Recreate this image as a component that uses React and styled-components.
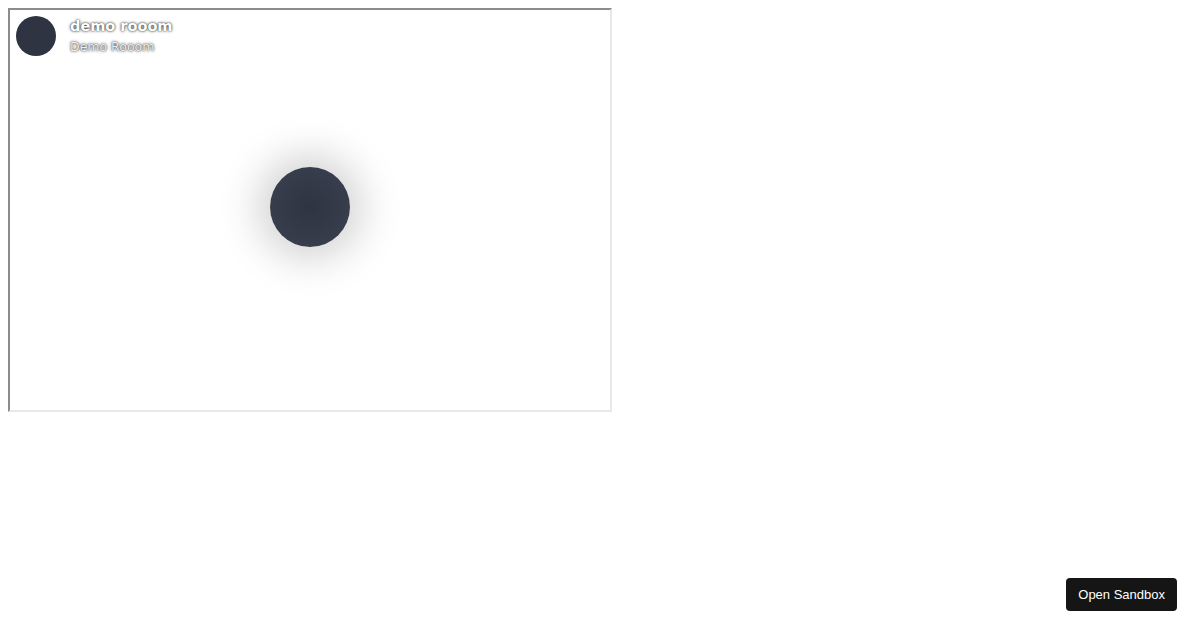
import React from "react";
import styled, { createGlobalStyle } from "styled-components";

const GlobalStyle = createGlobalStyle`
  html, body {
    margin: 0;
    background: #ffffff;
  }
  body {
    padding: 8px;
    font-family: "Liberation Sans", Arial, sans-serif;
  }
`;

const Frame = styled.div`
  position: relative;
  width: 600px;
  height: 400px;
  border-style: solid;
  border-width: 2px;
  border-color: #8c8c8c #e8e8e8 #e8e8e8 #8c8c8c;
  background: #ffffff;
  display: flex;
  align-items: center;
  justify-content: center;
  overflow: hidden;
`;

const Header = styled.div`
  position: absolute;
  top: 6px;
  left: 6px;
  display: flex;
  align-items: flex-start;
  gap: 14px;
`;

const Avatar = styled.div`
  width: 40px;
  height: 40px;
  border-radius: 50%;
  background: #2e3442;
`;

const Titles = styled.div`
  display: flex;
  flex-direction: column;
  padding-top: 1px;
  gap: 4px;
  font-family: "DejaVu Sans", Verdana, sans-serif;
  text-shadow: 0 0 3px rgba(0, 0, 0, 0.9), 0 0 1px rgba(0, 0, 0, 0.5);
`;

const Title = styled.div`
  color: #ffffff;
  font-size: 14.5px;
  font-weight: 700;
  line-height: 18px;
`;

const Subtitle = styled.div`
  color: #eeeeee;
  font-size: 12.5px;
  line-height: 16px;
`;

const Orb = styled.div`
  width: 80px;
  height: 80px;
  margin-bottom: 6px;
  border-radius: 50%;
  background: radial-gradient(circle, #2f3441 0%, #343a48 45%, #3a4151 100%);
  box-shadow: 0 0 40px 12px rgba(0, 0, 0, 0.18);
`;

const SandboxButton = styled.button`
  position: fixed;
  right: 23px;
  bottom: 19px;
  height: 33px;
  padding: 0 12px;
  border: none;
  border-radius: 4px;
  background: #151515;
  color: #ffffff;
  font-family: "Liberation Sans", Arial, sans-serif;
  font-size: 13px;
  cursor: pointer;
`;

export default function App() {
  return (
    <>
      <GlobalStyle />
      <Frame>
        <Header>
          <Avatar />
          <Titles>
            <Title>demo rooom</Title>
            <Subtitle>Demo Rooom</Subtitle>
          </Titles>
        </Header>
        <Orb />
      </Frame>
      <SandboxButton>Open Sandbox</SandboxButton>
    </>
  );
}
